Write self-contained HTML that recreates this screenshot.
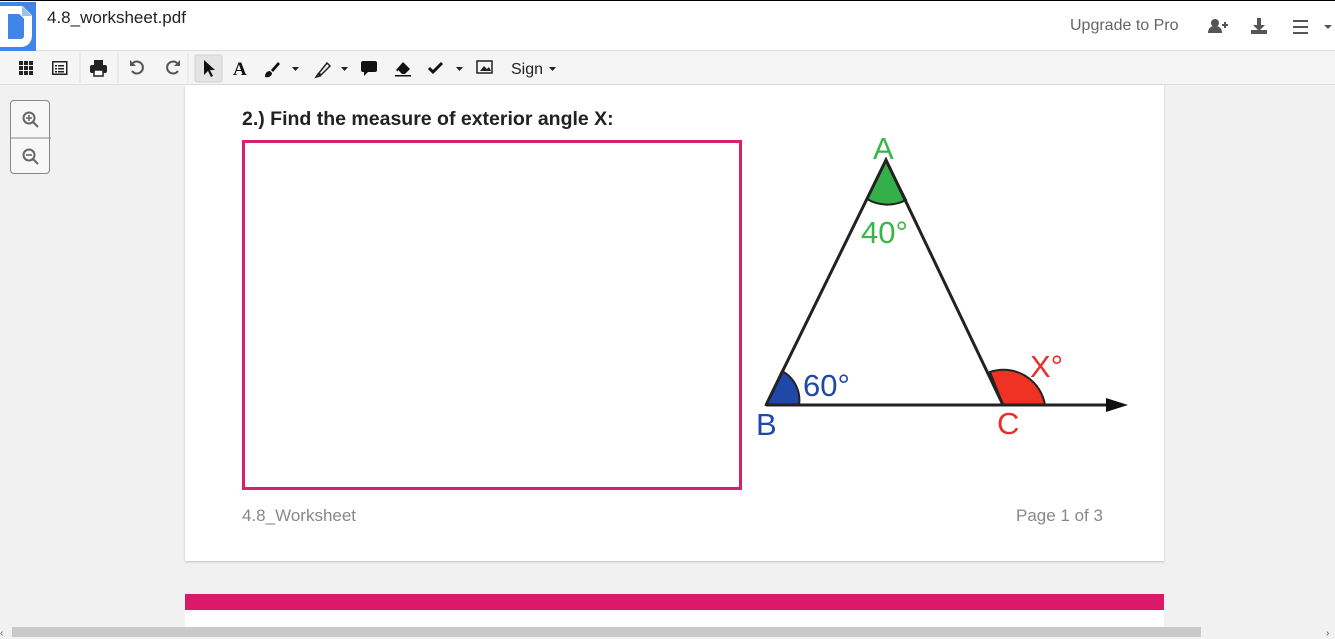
<!DOCTYPE html>
<html><head><meta charset="utf-8"><style>
*{margin:0;padding:0;box-sizing:border-box}
body{width:1335px;height:637px;overflow:hidden;background:#f1f1f1;font-family:"Liberation Sans",sans-serif;position:relative}
.top{position:absolute;left:0;top:0;width:1335px;height:51px;background:#fff;border-top:1px solid #000;border-bottom:1px solid #ddd}
.logo{position:absolute;left:0;top:1px;width:36px;height:50px;background:#3f86e8}
.title{position:absolute;left:47px;top:7px;font-size:17px;color:#222}
.tb{position:absolute;left:0;top:51px;width:1335px;height:34px;background:#f5f5f5;border-bottom:1px solid #ddd}
.ic{position:absolute;top:0}
.page{position:absolute;left:185px;top:85px;width:979px;height:476px;background:#fff;box-shadow:0 1px 2px rgba(0,0,0,.2)}
.p2{position:absolute;left:185px;top:594px;width:979px;height:43px;background:#fff;border-top:16px solid #dc1869}
.zoom{position:absolute;left:10px;top:100px;width:40px;height:74px;border:1px solid #888;border-radius:4px;background:#f7f7f7}
.sb{position:absolute;left:12px;top:627px;width:1189px;height:10px;background:#c9c9c9}
</style></head><body>
<div class="top">
<div class="logo"><svg width="36" height="50"><path d="M4 8H21L28 15V33Q28 41 20 41H4Z" fill="none" stroke="#fff" stroke-width="8" stroke-linejoin="miter"/><path d="M22 4v10h10z" fill="#9cc0f3"/></svg></div>
<div class="title">4.8_worksheet.pdf</div>
<div style="position:absolute;left:1070px;top:16px;font-size:16px;color:#666">Upgrade to Pro</div>
<svg style="position:absolute;left:1208px;top:17px" width="20" height="16"><circle cx="7" cy="5" r="4" fill="#555"/><path d="M0 15c0-5 3-7 7-7s7 2 7 7z" fill="#555"/><path d="M14 7h6M17 4v6" stroke="#555" stroke-width="2"/></svg>
<svg style="position:absolute;left:1251px;top:17px" width="16" height="17"><path d="M6 0h4v7h4l-6 6-6-6h4z" fill="#555"/><rect x="0" y="12" width="16" height="4" fill="#555"/></svg>
<svg style="position:absolute;left:1293px;top:19px" width="16" height="14"><path d="M0 1h15M0 7h15M0 13h15" stroke="#555" stroke-width="2"/></svg>
<svg style="position:absolute;left:1324px;top:24px" width="8" height="5"><path d="M0 0h8L4 4z" fill="#555"/></svg>
</div>
<div class="tb">
<svg class="ic" width="600" height="34">
<g fill="#222">
<g transform="translate(19,10)"><rect x="0" y="0" width="4" height="4"/><rect x="5" y="0" width="4" height="4"/><rect x="10" y="0" width="4" height="4"/><rect x="0" y="5" width="4" height="4"/><rect x="5" y="5" width="4" height="4"/><rect x="10" y="5" width="4" height="4"/><rect x="0" y="10" width="4" height="4"/><rect x="5" y="10" width="4" height="4"/><rect x="10" y="10" width="4" height="4"/></g>
<g transform="translate(52,10)"><rect x="0.75" y="0.75" width="14" height="12.5" fill="none" stroke="#222" stroke-width="1.5"/><rect x="3" y="4" width="2" height="1.5"/><rect x="6" y="4" width="6" height="1.5"/><rect x="3" y="7" width="2" height="1.5"/><rect x="6" y="7" width="6" height="1.5"/><rect x="3" y="10" width="2" height="1.5"/><rect x="6" y="10" width="6" height="1.5"/></g>
<g transform="translate(90,9)"><rect x="4" y="0" width="9" height="5"/><rect x="0" y="5" width="17" height="8" rx="2"/><rect x="4" y="10" width="9" height="6" fill="#fff" stroke="#222" stroke-width="1.5"/></g>
</g>
<line x1="80" y1="2" x2="80" y2="32" stroke="#ddd"/><line x1="118" y1="2" x2="118" y2="32" stroke="#ddd"/><line x1="188" y1="2" x2="188" y2="32" stroke="#ddd"/>
<path d="M133 12a6 6 0 1 1 -1 8" fill="none" stroke="#555" stroke-width="2"/><path d="M130 9v6h6z" fill="#555"/>
<path d="M177 12a6 6 0 1 0 1 8" fill="none" stroke="#555" stroke-width="2"/><path d="M180 9v6h-6z" fill="#555"/>
<rect x="195" y="4" width="27" height="27" rx="2" fill="#e4e4e4" stroke="#d0d0d0"/>
<path d="M204 9l0 15 4-4 3 6 2-1-3-6 5 0z" fill="#111"/>
<text x="233" y="24" font-family="Liberation Serif" font-weight="bold" font-size="19" fill="#111">A</text>
<path d="M265 26c0-4 2-6 5-6l2 2c0 3-3 5-7 4zM271 19l7-8 2 2-7 8z" fill="#111"/><path d="M292 16h7l-3.5 4z" fill="#222"/>
<path d="M316 26l2-3 2 2zM319 22l8-10 3 3-9 9z" fill="none" stroke="#222" stroke-width="1.5"/><path d="M341 16h7l-3.5 4z" fill="#222"/>
<rect x="361" y="10" width="16" height="11" rx="2" fill="#111"/><path d="M364 20v5l4-4z" fill="#111"/>
<path d="M396 19l7-8 7 7-5 5h-5z" fill="#111"/><path d="M398 19l4 4h-5z" fill="#fff"/><rect x="395" y="24" width="16" height="1.5" fill="#111"/>
<path d="M429 17l4 4 9-9" fill="none" stroke="#111" stroke-width="3"/><path d="M456 16h7l-3.5 4z" fill="#222"/>
<rect x="477" y="10" width="15" height="12" fill="none" stroke="#222" stroke-width="1.5"/><path d="M480 20l4-5 3 3 2-2 2 4z" fill="#222"/>
<text x="511" y="23" font-size="16" fill="#222">Sign</text><path d="M549 16h7l-3.5 4z" fill="#222"/>
</svg>
</div>
<div class="zoom">
<svg width="40" height="74"><line x1="0" y1="37" x2="40" y2="37" stroke="#888"/>
<g stroke="#666" stroke-width="2" fill="none"><circle cx="18" cy="17" r="5.5"/><path d="M22 21l5 5"/><path d="M15 17h6M18 14v6" stroke-width="1.6"/>
<circle cx="18" cy="54" r="5.5"/><path d="M22 58l5 5"/><path d="M15 54h6" stroke-width="1.6"/></g></svg>
</div>
<div class="page">
<div style="position:absolute;left:57px;top:23px;font-size:19.5px;font-weight:bold;color:#222">2.) Find the measure of exterior angle X:</div>
<div style="position:absolute;left:57px;top:55px;width:500px;height:350px;border:3px solid #d4226f"></div>
<div style="position:absolute;left:57px;top:421px;font-size:17px;color:#888">4.8_Worksheet</div>
<div style="position:absolute;left:831px;top:421px;font-size:17px;color:#888">Page 1 of 3</div>
</div>
<svg style="position:absolute;left:0;top:0" width="1335" height="637">
<path d="M886 160L867 199A40 40 0 0 0 906 200Z" fill="#33b04a" stroke="#222" stroke-width="2"/>
<path d="M766 405L799 405A33 33 0 0 0 782 371Z" fill="#1f48a8" stroke="#222" stroke-width="2"/>
<path d="M1003 405L1045 405A42 42 0 0 0 990 372Z" fill="#f03224" stroke="#222" stroke-width="2"/>
<path d="M766 405L886 160L1003 405" fill="none" stroke="#222" stroke-width="3"/>
<line x1="766" y1="405" x2="1110" y2="405" stroke="#222" stroke-width="3"/>
<path d="M1106 398L1128 405L1106 412z" fill="#111"/>
<g font-family="Liberation Sans" font-size="31">
<text x="873" y="159" fill="#3bb54a">A</text>
<text x="861" y="243" fill="#3bb54a">40°</text>
<text x="803" y="396" fill="#1f48a8">60°</text>
<text x="756" y="435" fill="#1f48a8">B</text>
<text x="997" y="434" fill="#e8302a">C</text>
<text x="1030" y="377" fill="#e8302a">X°</text>
</g>
</svg>
<div class="p2"></div>
<div class="sb"></div>
<div style="position:absolute;left:0;top:628px;font-size:10px;color:#555">‹</div>
<div style="position:absolute;left:1326px;top:628px;font-size:10px;color:#555">›</div>
</body></html>
